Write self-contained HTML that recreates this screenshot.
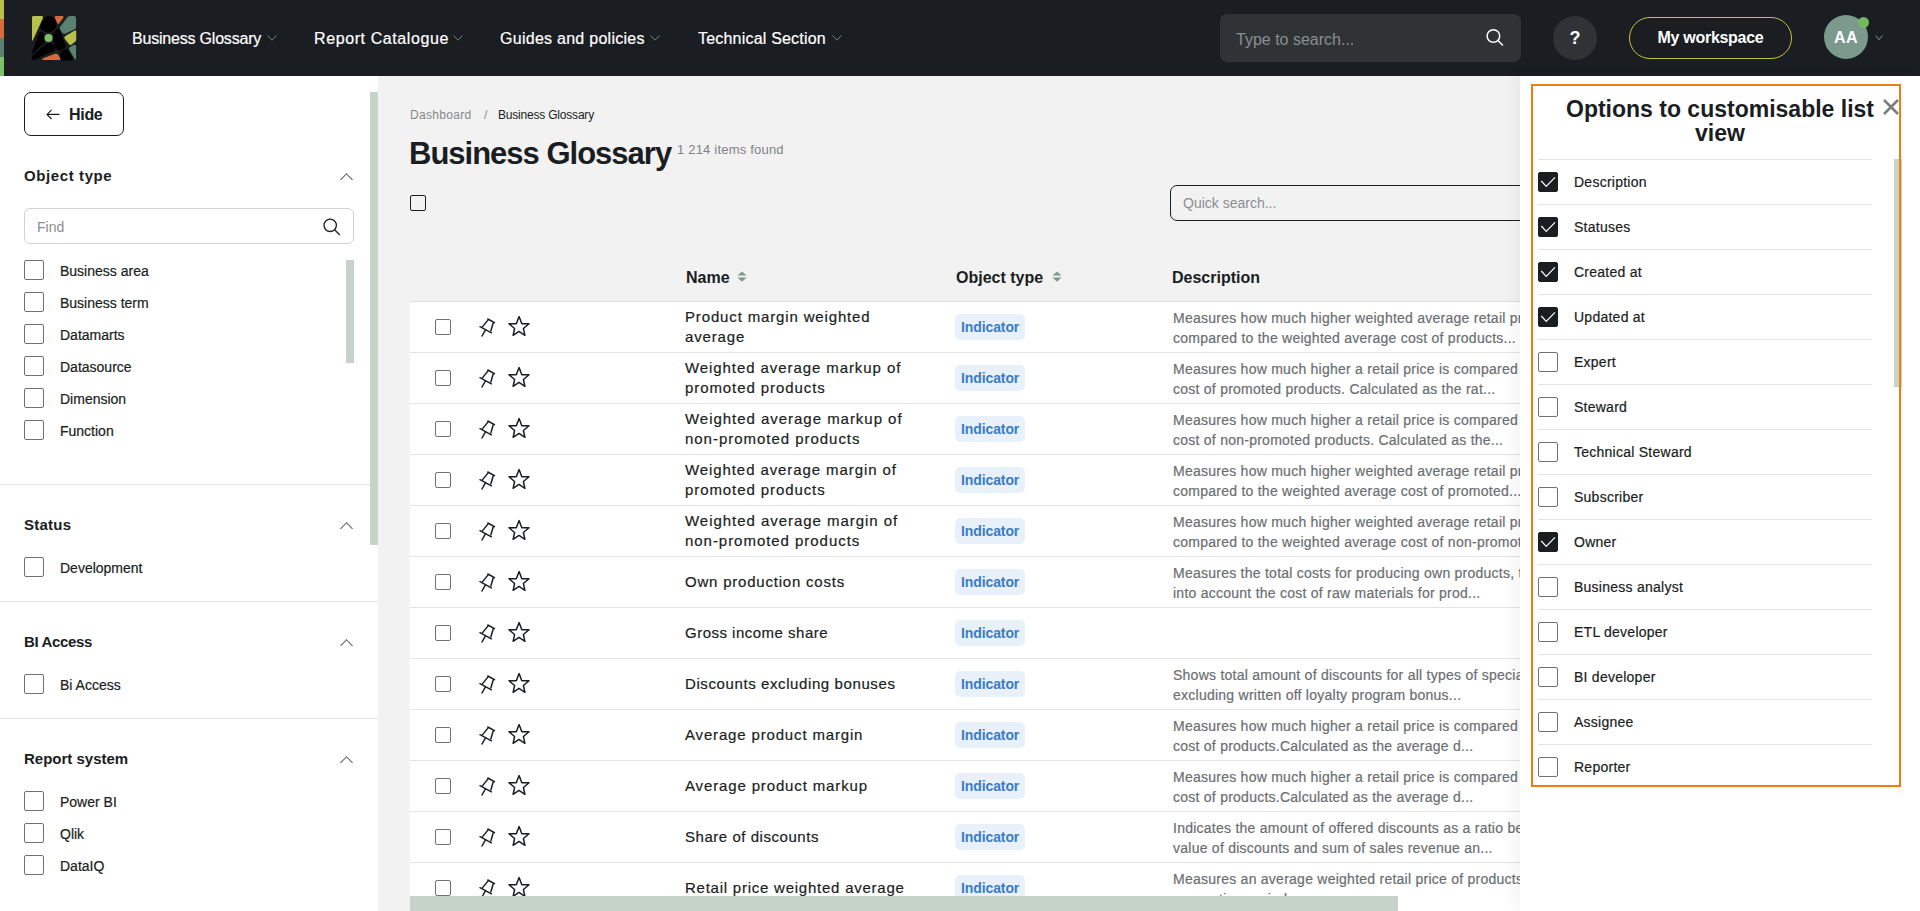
<!DOCTYPE html>
<html><head><meta charset="utf-8">
<style>
*{box-sizing:border-box;margin:0;padding:0}
html,body{width:1920px;height:911px;overflow:hidden;background:#f2f2f2;font-family:"Liberation Sans",sans-serif;color:#1a1d21}
.a{position:absolute}
#hdr{left:0;top:0;width:1920px;height:76px;background:#1a1d21}
.nav{color:#fff;font-size:16px;top:29px;line-height:20px;white-space:nowrap}
.chev{position:absolute;width:7px;height:7px;border-right:1.2px solid #8a8f94;border-bottom:1.2px solid #8a8f94;transform:rotate(45deg)}
#side{left:0;top:76px;width:378px;height:835px;background:#fff}
#main{left:378px;top:76px;width:1142px;height:835px;background:#f2f2f2;overflow:hidden}
#panel{left:1520px;top:76px;width:400px;height:835px;background:#fff;box-shadow:-6px 0 14px rgba(0,0,0,0.045)}
.cb{position:absolute;width:20px;height:20px;border:1.3px solid #6f7275;border-radius:2px;background:#fff}
.lbl{position:absolute;font-size:14px;line-height:18px;margin-top:1px;white-space:nowrap;color:#1a1d21}
.h3{position:absolute;font-size:15px;font-weight:bold;line-height:18px;white-space:nowrap;color:#1a1d21}
.up{position:absolute;width:9px;height:9px;border-left:1.2px solid #555b58;border-top:1.2px solid #555b58;transform:rotate(45deg);margin-top:1.5px}
.div{position:absolute;height:1px;background:#e3e3e3}
.sb{position:absolute;background:#c5d3c8}
.th{position:absolute;top:193px;font-size:16px;font-weight:bold;line-height:18px;white-space:nowrap;color:#1a1d21}
.row{position:absolute;left:32px;width:1200px;height:51px;background:#fff;border-bottom:1px solid #e3e3e3}
.rcb{position:absolute;left:25px;top:17px;width:16px;height:16px;border:1.3px solid #6f7275;border-radius:2px}
.nm{position:absolute;left:275px;top:5px;height:40px;display:flex;align-items:center;font-size:15px;line-height:20px;letter-spacing:0.8px;white-space:nowrap;color:#1a1d21}
.badge{position:absolute;left:545px;top:12px;width:70px;height:26px;background:#e8f1fa;border-radius:5px;color:#3b7cc2;font-size:14px;font-weight:bold;line-height:26px;padding-left:6px;letter-spacing:-0.1px}
.ds{position:absolute;left:763px;top:6px;height:40px;display:flex;align-items:center;font-size:14px;line-height:20px;letter-spacing:0.25px;white-space:nowrap;color:#6b6e71}
.prow{position:absolute;left:5px;width:334px;height:45px;border-top:1px solid #e3e3e3}
.pcb{position:absolute;left:0;top:12px;width:20px;height:20px;border:1.3px solid #6f7275;border-radius:2px;background:#fff}
.pcb.on{background:#1a1d21;border-color:#1a1d21}
.pcb svg{position:absolute;left:-1.5px;top:-1.5px}
.plbl{position:absolute;left:36px;top:12.6px;font-size:14px;line-height:18px;white-space:nowrap;color:#1a1d21;letter-spacing:0.25px}
.nm,.lbl,.plbl,.nav,.ds{-webkit-text-stroke:0.2px currentColor}
</style></head>
<body>
<!-- HEADER -->
<div id="hdr" class="a">
  <div class="a" style="left:0;top:0;width:4px;height:19px;background:#b8c24a"></div>
  <div class="a" style="left:0;top:19px;width:4px;height:19px;background:#d96a3a"></div>
  <div class="a" style="left:0;top:38px;width:4px;height:19px;background:#5a8070"></div>
  <div class="a" style="left:0;top:57px;width:4px;height:19px;background:#7cc06a"></div>
  <svg class="a" style="left:28px;top:12px" width="52" height="52" viewBox="0 0 911 911">
    <path fill="#000" stroke="#000" stroke-width="16" stroke-linejoin="round" d="M300,95 Q365,60 430,95 Q495,140 485,250 Q470,330 400,345 L330,345 Q240,330 225,270 Q215,200 300,95 Z"/>
    <path fill="#000" stroke="#000" stroke-width="16" stroke-linejoin="round" d="M85,690 L200,370 Q215,345 250,355 L272,372 Q262,440 292,525 L100,705 Q70,725 85,690 Z"/>
    <path fill="#000" stroke="#000" stroke-width="16" stroke-linejoin="round" d="M90,760 L300,575 Q330,555 400,555 L432,568 Q472,610 467,672 L262,760 Q150,825 100,838 Q55,835 90,760 Z"/>
    <path fill="#000" stroke="#000" stroke-width="16" stroke-linejoin="round" d="M458,522 Q432,470 452,382 L505,305 Q530,288 557,330 L652,590 Q657,632 620,647 L562,667 Q522,667 492,632 Z"/>
    <path fill="#000" stroke="#000" stroke-width="16" stroke-linejoin="round" d="M577,702 Q622,667 692,657 L772,792 Q792,842 742,842 L592,842 Q562,837 562,802 Z"/>
    <path fill="#b8c24a" d="M95,70 L240,70 Q275,72 258,112 L88,492 Q70,520 70,480 L70,95 Q70,70 95,70 Z"/>
    <path fill="#d96a3a" d="M490,70 L605,70 Q635,72 618,100 L548,195 Q530,215 512,195 L470,100 Q458,70 490,70 Z"/>
    <path fill="#5a8070" d="M700,80 Q715,70 740,70 L805,70 Q842,70 842,110 L842,270 Q842,292 820,302 L660,378 Q615,395 585,345 L560,300 Q550,275 570,250 Z"/>
    <path fill="#b8c24a" d="M655,420 L818,325 Q845,315 845,345 L845,480 Q845,505 825,520 L765,570 Q740,590 718,565 L640,470 Q625,440 655,420 Z"/>
    <path fill="#5a8070" d="M735,615 L810,575 Q842,565 842,600 L842,815 Q842,850 815,820 L722,660 Q712,630 735,615 Z"/>
    <path fill="#d96a3a" d="M265,810 L450,738 Q500,722 530,752 L565,810 Q580,842 545,842 L270,842 Q232,838 265,810 Z"/>
    <circle cx="360" cy="455" r="70" fill="#7cc06a"/>
  </svg>
  <div class="a nav" style="left:132px;letter-spacing:-0.2px">Business Glossary</div><svg class="a" style="left:267px;top:35px" width="10" height="6.2" viewBox="0 0 10 6.2"><path d="M0.5 0.5 L5.0 5.2 L9.5 0.5" fill="none" stroke="#7a8c86" stroke-width="0.95"/></svg>
  <div class="a nav" style="left:314px;letter-spacing:0.6px">Report Catalogue</div><svg class="a" style="left:453px;top:35px" width="10" height="6.2" viewBox="0 0 10 6.2"><path d="M0.5 0.5 L5.0 5.2 L9.5 0.5" fill="none" stroke="#7a8c86" stroke-width="0.95"/></svg>
  <div class="a nav" style="left:500px;letter-spacing:0.27px">Guides and policies</div><svg class="a" style="left:650px;top:35px" width="10" height="6.2" viewBox="0 0 10 6.2"><path d="M0.5 0.5 L5.0 5.2 L9.5 0.5" fill="none" stroke="#7a8c86" stroke-width="0.95"/></svg>
  <div class="a nav" style="left:698px;letter-spacing:0.2px">Technical Section</div><svg class="a" style="left:832px;top:35px" width="10" height="6.2" viewBox="0 0 10 6.2"><path d="M0.5 0.5 L5.0 5.2 L9.5 0.5" fill="none" stroke="#7a8c86" stroke-width="0.95"/></svg>
  <div class="a" style="left:1220px;top:14px;width:301px;height:48px;background:#303336;border-radius:7px"></div>
  <div class="a" style="left:1236px;top:30px;font-size:16px;line-height:20px;color:#8b8e91;white-space:nowrap">Type to search...</div>
  <svg class="a" style="left:1484px;top:27px" width="22" height="22" viewBox="0 0 22 22"><circle cx="9.4" cy="9" r="6.3" fill="none" stroke="#fff" stroke-width="1.5"/><path d="M13.9 13.5 L18.5 18" stroke="#fff" stroke-width="1.5" stroke-linecap="round"/></svg>
  <div class="a" style="left:1553px;top:16px;width:44px;height:44px;border-radius:50%;background:#303336;color:#fff;font-weight:bold;font-size:18px;line-height:45px;text-align:center">?</div>
  <div class="a" style="left:1629px;top:17px;width:163px;height:42px;border:1.5px solid #c3c23c;border-radius:21px;color:#fff;font-weight:bold;font-size:16px;line-height:39px;text-align:center;letter-spacing:-0.3px">My workspace</div>
  <div class="a" style="left:1824px;top:15px;width:44px;height:44px;border-radius:50%;background:#7b9a8b;color:#fff;font-weight:bold;font-size:16px;line-height:45px;letter-spacing:0.5px;text-align:center">AA</div>
  <div class="a" style="left:1858px;top:17px;width:11px;height:11px;border-radius:50%;background:#74b85e"></div>
  <svg class="a" style="left:1875px;top:34.5px" width="8" height="5.6" viewBox="0 0 8 5.6"><path d="M0.5 0.5 L4.0 4.6 L7.5 0.5" fill="none" stroke="#6c7a76" stroke-width="1.1"/></svg>
</div>

<!-- SIDEBAR -->
<div id="side" class="a">
  <div class="a" style="left:24px;top:16px;width:100px;height:44px;border:1.5px solid #1a1d21;border-radius:7px"></div>
  <svg class="a" style="left:46px;top:31px" width="14" height="14" viewBox="0 0 14 14"><path d="M13.5 7.4 H1 M5.6 2.8 L1 7.4 L5.6 12" fill="none" stroke="#1a1d21" stroke-width="1.1"/></svg>
  <div class="a" style="left:69px;top:29px;font-size:16px;font-weight:bold;line-height:20px;letter-spacing:-0.3px">Hide</div>

  <div class="h3" style="left:24px;top:91px;letter-spacing:0.6px">Object type</div>
  <div class="up" style="left:342px;top:97px"></div>
  <div class="a" style="left:24px;top:132px;width:330px;height:36px;border:1px solid #d2d2d2;border-radius:6px"></div>
  <div class="a" style="left:37px;top:142px;font-size:14px;line-height:18px;color:#8b8e91">Find</div>
  <svg class="a" style="left:321px;top:141px" width="22" height="22" viewBox="0 0 22 22"><circle cx="9.2" cy="8.3" r="6.2" fill="none" stroke="#1a1d21" stroke-width="1.3"/><path d="M13.6 12.8 L18.4 17.5" stroke="#1a1d21" stroke-width="1.3" stroke-linecap="round"/></svg>
  <div class="cb" style="left:24px;top:184px"></div><div class="lbl" style="left:60px;top:185px">Business area</div>
  <div class="cb" style="left:24px;top:216px"></div><div class="lbl" style="left:60px;top:217px">Business term</div>
  <div class="cb" style="left:24px;top:248px"></div><div class="lbl" style="left:60px;top:249px">Datamarts</div>
  <div class="cb" style="left:24px;top:280px"></div><div class="lbl" style="left:60px;top:281px">Datasource</div>
  <div class="cb" style="left:24px;top:312px"></div><div class="lbl" style="left:60px;top:313px">Dimension</div>
  <div class="cb" style="left:24px;top:344px"></div><div class="lbl" style="left:60px;top:345px">Function</div>
  <div class="sb" style="left:346px;top:184px;width:8px;height:103px"></div>
  <div class="div" style="left:0;top:408px;width:370px"></div>

  <div class="h3" style="left:24px;top:440px;letter-spacing:0.25px">Status</div>
  <div class="up" style="left:342px;top:446px"></div>
  <div class="cb" style="left:24px;top:481px"></div><div class="lbl" style="left:60px;top:482px">Development</div>
  <div class="div" style="left:0;top:525px;width:378px"></div>

  <div class="h3" style="left:24px;top:557px;letter-spacing:-0.35px">BI Access</div>
  <div class="up" style="left:342px;top:563px"></div>
  <div class="cb" style="left:24px;top:598px"></div><div class="lbl" style="left:60px;top:599px">Bi Access</div>
  <div class="div" style="left:0;top:642px;width:378px"></div>

  <div class="h3" style="left:24px;top:674px">Report system</div>
  <div class="up" style="left:342px;top:680px"></div>
  <div class="cb" style="left:24px;top:715px"></div><div class="lbl" style="left:60px;top:716px">Power BI</div>
  <div class="cb" style="left:24px;top:747px"></div><div class="lbl" style="left:60px;top:748px">Qlik</div>
  <div class="cb" style="left:24px;top:779px"></div><div class="lbl" style="left:60px;top:780px">DataIQ</div>

  <div class="sb" style="left:370px;top:16px;width:8px;height:453px"></div>
</div>

<!-- MAIN -->
<div id="main" class="a">
  <div class="a" style="left:32px;top:31px;font-size:12px;line-height:16px;color:#85888b;white-space:nowrap;letter-spacing:0.3px">Dashboard</div>
  <div class="a" style="left:106px;top:31px;font-size:12px;line-height:16px;color:#8b8e91">/</div>
  <div class="a" style="left:120px;top:31px;font-size:12px;line-height:16px;color:#1a1d21;white-space:nowrap;letter-spacing:-0.2px">Business Glossary</div>
  <div class="a" style="left:31px;top:60px;font-size:31px;font-weight:bold;line-height:36px;color:#1a1d21;white-space:nowrap;letter-spacing:-1px">Business Glossary</div>
  <div class="a" style="left:299px;top:66px;font-size:13px;line-height:16px;color:#7f8286;white-space:nowrap;letter-spacing:0.2px">1 214 items found</div>
  <div class="a" style="left:32px;top:119px;width:16px;height:16px;border:1.5px solid #1a1d21;border-radius:2px"></div>
  <div class="a" style="left:792px;top:109px;width:500px;height:36px;border:1px solid #1a1d21;border-radius:7px"></div>
  <div class="a" style="left:805px;top:118px;font-size:14px;line-height:18px;color:#8b8e91;white-space:nowrap">Quick search...</div>
  <div class="th" style="left:308px">Name</div><svg class="a srt" style="left:359px;top:195px" width="10" height="12" viewBox="0 0 10 12"><path d="M5 0.6 L9.6 4.6 H0.4 Z M0.4 6.6 H9.6 L5 10.8 Z" fill="#7f9a8c"/></svg>
  <div class="th" style="left:578px">Object type</div><svg class="a srt" style="left:674px;top:195px" width="10" height="12" viewBox="0 0 10 12"><path d="M5 0.6 L9.6 4.6 H0.4 Z M0.4 6.6 H9.6 L5 10.8 Z" fill="#7f9a8c"/></svg>
  <div class="th" style="left:794px">Description</div>
  <div class="a" style="left:32px;top:225px;width:1200px;height:1px;background:#dedede"></div>
  <div class="row" style="top:226px">
    <div class="rcb"></div><svg class="a" style="left:68px;top:12px" width="24" height="24" viewBox="0 0 24 24"><path d="M9.8 5 L16.5 8.6 M10.3 5.6 L4.6 12.6 M15.4 8.3 L12.9 16.8 M2 12.7 L13.4 18.8 M7.3 16.2 L4 22" fill="none" stroke="#1a1d21" stroke-width="1.5" stroke-linecap="round"/></svg><svg class="a" style="left:97px;top:12px" width="24" height="24" viewBox="0 0 24 24"><path d="M12.1 2.6 L14.8 9.8 L22 9.8 L16.4 14.5 L17.9 21.3 L12 17.4 L6.1 21.3 L7.6 14.5 L2 9.8 L9.3 9.8 Z" fill="none" stroke="#1a1d21" stroke-width="1.5" stroke-linejoin="round"/></svg>
    <div class="nm" style="letter-spacing:0.85px">Product margin weighted<br>average</div>
    <div class="badge">Indicator</div>
    <div class="ds">Measures how much higher weighted average retail price is<br>compared to the weighted average cost of products...</div>
  </div>
  <div class="row" style="top:277px">
    <div class="rcb"></div><svg class="a" style="left:68px;top:12px" width="24" height="24" viewBox="0 0 24 24"><path d="M9.8 5 L16.5 8.6 M10.3 5.6 L4.6 12.6 M15.4 8.3 L12.9 16.8 M2 12.7 L13.4 18.8 M7.3 16.2 L4 22" fill="none" stroke="#1a1d21" stroke-width="1.5" stroke-linecap="round"/></svg><svg class="a" style="left:97px;top:12px" width="24" height="24" viewBox="0 0 24 24"><path d="M12.1 2.6 L14.8 9.8 L22 9.8 L16.4 14.5 L17.9 21.3 L12 17.4 L6.1 21.3 L7.6 14.5 L2 9.8 L9.3 9.8 Z" fill="none" stroke="#1a1d21" stroke-width="1.5" stroke-linejoin="round"/></svg>
    <div class="nm" style="letter-spacing:0.92px">Weighted average markup of<br>promoted products</div>
    <div class="badge">Indicator</div>
    <div class="ds">Measures how much higher a retail price is compared to the<br>cost of promoted products. Calculated as the rat...</div>
  </div>
  <div class="row" style="top:328px">
    <div class="rcb"></div><svg class="a" style="left:68px;top:12px" width="24" height="24" viewBox="0 0 24 24"><path d="M9.8 5 L16.5 8.6 M10.3 5.6 L4.6 12.6 M15.4 8.3 L12.9 16.8 M2 12.7 L13.4 18.8 M7.3 16.2 L4 22" fill="none" stroke="#1a1d21" stroke-width="1.5" stroke-linecap="round"/></svg><svg class="a" style="left:97px;top:12px" width="24" height="24" viewBox="0 0 24 24"><path d="M12.1 2.6 L14.8 9.8 L22 9.8 L16.4 14.5 L17.9 21.3 L12 17.4 L6.1 21.3 L7.6 14.5 L2 9.8 L9.3 9.8 Z" fill="none" stroke="#1a1d21" stroke-width="1.5" stroke-linejoin="round"/></svg>
    <div class="nm" style="letter-spacing:0.97px">Weighted average markup of<br>non-promoted products</div>
    <div class="badge">Indicator</div>
    <div class="ds">Measures how much higher a retail price is compared to the<br>cost of non-promoted products. Calculated as the...</div>
  </div>
  <div class="row" style="top:379px">
    <div class="rcb"></div><svg class="a" style="left:68px;top:12px" width="24" height="24" viewBox="0 0 24 24"><path d="M9.8 5 L16.5 8.6 M10.3 5.6 L4.6 12.6 M15.4 8.3 L12.9 16.8 M2 12.7 L13.4 18.8 M7.3 16.2 L4 22" fill="none" stroke="#1a1d21" stroke-width="1.5" stroke-linecap="round"/></svg><svg class="a" style="left:97px;top:12px" width="24" height="24" viewBox="0 0 24 24"><path d="M12.1 2.6 L14.8 9.8 L22 9.8 L16.4 14.5 L17.9 21.3 L12 17.4 L6.1 21.3 L7.6 14.5 L2 9.8 L9.3 9.8 Z" fill="none" stroke="#1a1d21" stroke-width="1.5" stroke-linejoin="round"/></svg>
    <div class="nm" style="letter-spacing:0.91px">Weighted average margin of<br>promoted products</div>
    <div class="badge">Indicator</div>
    <div class="ds">Measures how much higher weighted average retail price is<br>compared to the weighted average cost of promoted...</div>
  </div>
  <div class="row" style="top:430px">
    <div class="rcb"></div><svg class="a" style="left:68px;top:12px" width="24" height="24" viewBox="0 0 24 24"><path d="M9.8 5 L16.5 8.6 M10.3 5.6 L4.6 12.6 M15.4 8.3 L12.9 16.8 M2 12.7 L13.4 18.8 M7.3 16.2 L4 22" fill="none" stroke="#1a1d21" stroke-width="1.5" stroke-linecap="round"/></svg><svg class="a" style="left:97px;top:12px" width="24" height="24" viewBox="0 0 24 24"><path d="M12.1 2.6 L14.8 9.8 L22 9.8 L16.4 14.5 L17.9 21.3 L12 17.4 L6.1 21.3 L7.6 14.5 L2 9.8 L9.3 9.8 Z" fill="none" stroke="#1a1d21" stroke-width="1.5" stroke-linejoin="round"/></svg>
    <div class="nm" style="letter-spacing:0.96px">Weighted average margin of<br>non-promoted products</div>
    <div class="badge">Indicator</div>
    <div class="ds">Measures how much higher weighted average retail price is<br>compared to the weighted average cost of non-promoted...</div>
  </div>
  <div class="row" style="top:481px">
    <div class="rcb"></div><svg class="a" style="left:68px;top:12px" width="24" height="24" viewBox="0 0 24 24"><path d="M9.8 5 L16.5 8.6 M10.3 5.6 L4.6 12.6 M15.4 8.3 L12.9 16.8 M2 12.7 L13.4 18.8 M7.3 16.2 L4 22" fill="none" stroke="#1a1d21" stroke-width="1.5" stroke-linecap="round"/></svg><svg class="a" style="left:97px;top:12px" width="24" height="24" viewBox="0 0 24 24"><path d="M12.1 2.6 L14.8 9.8 L22 9.8 L16.4 14.5 L17.9 21.3 L12 17.4 L6.1 21.3 L7.6 14.5 L2 9.8 L9.3 9.8 Z" fill="none" stroke="#1a1d21" stroke-width="1.5" stroke-linejoin="round"/></svg>
    <div class="nm" style="letter-spacing:0.79px">Own production costs</div>
    <div class="badge">Indicator</div>
    <div class="ds">Measures the total costs for producing own products, taking<br>into account the cost of raw materials for prod...</div>
  </div>
  <div class="row" style="top:532px">
    <div class="rcb"></div><svg class="a" style="left:68px;top:12px" width="24" height="24" viewBox="0 0 24 24"><path d="M9.8 5 L16.5 8.6 M10.3 5.6 L4.6 12.6 M15.4 8.3 L12.9 16.8 M2 12.7 L13.4 18.8 M7.3 16.2 L4 22" fill="none" stroke="#1a1d21" stroke-width="1.5" stroke-linecap="round"/></svg><svg class="a" style="left:97px;top:12px" width="24" height="24" viewBox="0 0 24 24"><path d="M12.1 2.6 L14.8 9.8 L22 9.8 L16.4 14.5 L17.9 21.3 L12 17.4 L6.1 21.3 L7.6 14.5 L2 9.8 L9.3 9.8 Z" fill="none" stroke="#1a1d21" stroke-width="1.5" stroke-linejoin="round"/></svg>
    <div class="nm" style="letter-spacing:0.49px">Gross income share</div>
    <div class="badge">Indicator</div>
    <div class="ds"></div>
  </div>
  <div class="row" style="top:583px">
    <div class="rcb"></div><svg class="a" style="left:68px;top:12px" width="24" height="24" viewBox="0 0 24 24"><path d="M9.8 5 L16.5 8.6 M10.3 5.6 L4.6 12.6 M15.4 8.3 L12.9 16.8 M2 12.7 L13.4 18.8 M7.3 16.2 L4 22" fill="none" stroke="#1a1d21" stroke-width="1.5" stroke-linecap="round"/></svg><svg class="a" style="left:97px;top:12px" width="24" height="24" viewBox="0 0 24 24"><path d="M12.1 2.6 L14.8 9.8 L22 9.8 L16.4 14.5 L17.9 21.3 L12 17.4 L6.1 21.3 L7.6 14.5 L2 9.8 L9.3 9.8 Z" fill="none" stroke="#1a1d21" stroke-width="1.5" stroke-linejoin="round"/></svg>
    <div class="nm" style="letter-spacing:0.6px">Discounts excluding bonuses</div>
    <div class="badge">Indicator</div>
    <div class="ds">Shows total amount of discounts for all types of special offers<br>excluding written off loyalty program bonus...</div>
  </div>
  <div class="row" style="top:634px">
    <div class="rcb"></div><svg class="a" style="left:68px;top:12px" width="24" height="24" viewBox="0 0 24 24"><path d="M9.8 5 L16.5 8.6 M10.3 5.6 L4.6 12.6 M15.4 8.3 L12.9 16.8 M2 12.7 L13.4 18.8 M7.3 16.2 L4 22" fill="none" stroke="#1a1d21" stroke-width="1.5" stroke-linecap="round"/></svg><svg class="a" style="left:97px;top:12px" width="24" height="24" viewBox="0 0 24 24"><path d="M12.1 2.6 L14.8 9.8 L22 9.8 L16.4 14.5 L17.9 21.3 L12 17.4 L6.1 21.3 L7.6 14.5 L2 9.8 L9.3 9.8 Z" fill="none" stroke="#1a1d21" stroke-width="1.5" stroke-linejoin="round"/></svg>
    <div class="nm" style="letter-spacing:0.84px">Average product margin</div>
    <div class="badge">Indicator</div>
    <div class="ds">Measures how much higher a retail price is compared to the<br>cost of products.Calculated as the average d...</div>
  </div>
  <div class="row" style="top:685px">
    <div class="rcb"></div><svg class="a" style="left:68px;top:12px" width="24" height="24" viewBox="0 0 24 24"><path d="M9.8 5 L16.5 8.6 M10.3 5.6 L4.6 12.6 M15.4 8.3 L12.9 16.8 M2 12.7 L13.4 18.8 M7.3 16.2 L4 22" fill="none" stroke="#1a1d21" stroke-width="1.5" stroke-linecap="round"/></svg><svg class="a" style="left:97px;top:12px" width="24" height="24" viewBox="0 0 24 24"><path d="M12.1 2.6 L14.8 9.8 L22 9.8 L16.4 14.5 L17.9 21.3 L12 17.4 L6.1 21.3 L7.6 14.5 L2 9.8 L9.3 9.8 Z" fill="none" stroke="#1a1d21" stroke-width="1.5" stroke-linejoin="round"/></svg>
    <div class="nm" style="letter-spacing:0.86px">Average product markup</div>
    <div class="badge">Indicator</div>
    <div class="ds">Measures how much higher a retail price is compared to the<br>cost of products.Calculated as the average d...</div>
  </div>
  <div class="row" style="top:736px">
    <div class="rcb"></div><svg class="a" style="left:68px;top:12px" width="24" height="24" viewBox="0 0 24 24"><path d="M9.8 5 L16.5 8.6 M10.3 5.6 L4.6 12.6 M15.4 8.3 L12.9 16.8 M2 12.7 L13.4 18.8 M7.3 16.2 L4 22" fill="none" stroke="#1a1d21" stroke-width="1.5" stroke-linecap="round"/></svg><svg class="a" style="left:97px;top:12px" width="24" height="24" viewBox="0 0 24 24"><path d="M12.1 2.6 L14.8 9.8 L22 9.8 L16.4 14.5 L17.9 21.3 L12 17.4 L6.1 21.3 L7.6 14.5 L2 9.8 L9.3 9.8 Z" fill="none" stroke="#1a1d21" stroke-width="1.5" stroke-linejoin="round"/></svg>
    <div class="nm" style="letter-spacing:0.54px">Share of discounts</div>
    <div class="badge">Indicator</div>
    <div class="ds">Indicates the amount of offered discounts as a ratio between<br>value of discounts and sum of sales revenue an...</div>
  </div>
  <div class="row" style="top:787px">
    <div class="rcb"></div><svg class="a" style="left:68px;top:12px" width="24" height="24" viewBox="0 0 24 24"><path d="M9.8 5 L16.5 8.6 M10.3 5.6 L4.6 12.6 M15.4 8.3 L12.9 16.8 M2 12.7 L13.4 18.8 M7.3 16.2 L4 22" fill="none" stroke="#1a1d21" stroke-width="1.5" stroke-linecap="round"/></svg><svg class="a" style="left:97px;top:12px" width="24" height="24" viewBox="0 0 24 24"><path d="M12.1 2.6 L14.8 9.8 L22 9.8 L16.4 14.5 L17.9 21.3 L12 17.4 L6.1 21.3 L7.6 14.5 L2 9.8 L9.3 9.8 Z" fill="none" stroke="#1a1d21" stroke-width="1.5" stroke-linejoin="round"/></svg>
    <div class="nm" style="letter-spacing:0.76px">Retail price weighted average</div>
    <div class="badge">Indicator</div>
    <div class="ds">Measures an average weighted retail price of products for<br>a reporting period...</div>
  </div>
  <div class="sb" style="left:32px;top:820px;width:988px;height:15px"></div>
</div>

<!-- PANEL -->
<div id="panel" class="a">
  <div class="a" style="left:11px;top:8px;width:370px;height:703px;border:2px solid transparent">
    <div class="a" style="left:22px;top:11px;width:330px;font-size:23px;font-weight:bold;line-height:24px;text-align:center;color:#1a1d21">Options to customisable list view</div>
    <svg class="a" style="left:348px;top:11px" width="20" height="20" viewBox="0 0 20 20"><path d="M3 3 L17 17 M17 3 L3 17" stroke="#7a7d80" stroke-width="2.6"/></svg>
    <div class="prow" style="top:73px"><div class="pcb on"><svg width="20" height="20" viewBox="0 0 20 20"><path d="M3.3 9 L8.2 14.3 L17 5.3" fill="none" stroke="#fff" stroke-width="1.2"/></svg></div><div class="plbl">Description</div></div>
    <div class="prow" style="top:118px"><div class="pcb on"><svg width="20" height="20" viewBox="0 0 20 20"><path d="M3.3 9 L8.2 14.3 L17 5.3" fill="none" stroke="#fff" stroke-width="1.2"/></svg></div><div class="plbl">Statuses</div></div>
    <div class="prow" style="top:163px"><div class="pcb on"><svg width="20" height="20" viewBox="0 0 20 20"><path d="M3.3 9 L8.2 14.3 L17 5.3" fill="none" stroke="#fff" stroke-width="1.2"/></svg></div><div class="plbl">Created at</div></div>
    <div class="prow" style="top:208px"><div class="pcb on"><svg width="20" height="20" viewBox="0 0 20 20"><path d="M3.3 9 L8.2 14.3 L17 5.3" fill="none" stroke="#fff" stroke-width="1.2"/></svg></div><div class="plbl">Updated at</div></div>
    <div class="prow" style="top:253px"><div class="pcb"></div><div class="plbl">Expert</div></div>
    <div class="prow" style="top:298px"><div class="pcb"></div><div class="plbl">Steward</div></div>
    <div class="prow" style="top:343px"><div class="pcb"></div><div class="plbl">Technical Steward</div></div>
    <div class="prow" style="top:388px"><div class="pcb"></div><div class="plbl">Subscriber</div></div>
    <div class="prow" style="top:433px"><div class="pcb on"><svg width="20" height="20" viewBox="0 0 20 20"><path d="M3.3 9 L8.2 14.3 L17 5.3" fill="none" stroke="#fff" stroke-width="1.2"/></svg></div><div class="plbl">Owner</div></div>
    <div class="prow" style="top:478px"><div class="pcb"></div><div class="plbl">Business analyst</div></div>
    <div class="prow" style="top:523px"><div class="pcb"></div><div class="plbl">ETL developer</div></div>
    <div class="prow" style="top:568px"><div class="pcb"></div><div class="plbl">BI developer</div></div>
    <div class="prow" style="top:613px"><div class="pcb"></div><div class="plbl">Assignee</div></div>
    <div class="prow" style="top:658px"><div class="pcb"></div><div class="plbl">Reporter</div></div>
    <div class="sb" style="left:361px;top:73px;width:8px;height:228px"></div>
  </div>
  <div class="a" style="left:11px;top:8px;width:370px;height:703px;border:2px solid #f07c14"></div>
</div>
</body></html>
